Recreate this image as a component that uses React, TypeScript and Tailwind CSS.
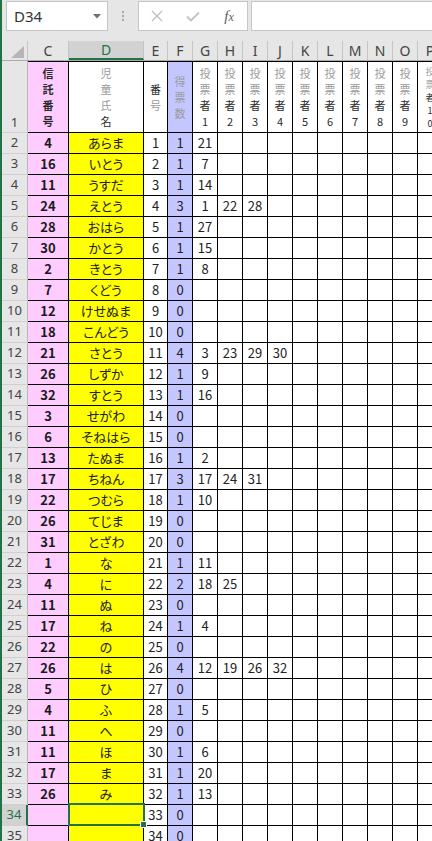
import React from 'react';

type R = { c?: number; d?: string; e: number; f: number; v: number[] };

const data: R[] = [
  { c: 4, d: 'あらま', e: 1, f: 1, v: [21] },
  { c: 16, d: 'いとう', e: 2, f: 1, v: [7] },
  { c: 11, d: 'うすだ', e: 3, f: 1, v: [14] },
  { c: 24, d: 'えとう', e: 4, f: 3, v: [1, 22, 28] },
  { c: 28, d: 'おはら', e: 5, f: 1, v: [27] },
  { c: 30, d: 'かとう', e: 6, f: 1, v: [15] },
  { c: 2, d: 'きとう', e: 7, f: 1, v: [8] },
  { c: 7, d: 'くどう', e: 8, f: 0, v: [] },
  { c: 12, d: 'けせぬま', e: 9, f: 0, v: [] },
  { c: 18, d: 'こんどう', e: 10, f: 0, v: [] },
  { c: 21, d: 'さとう', e: 11, f: 4, v: [3, 23, 29, 30] },
  { c: 26, d: 'しずか', e: 12, f: 1, v: [9] },
  { c: 32, d: 'すとう', e: 13, f: 1, v: [16] },
  { c: 3, d: 'せがわ', e: 14, f: 0, v: [] },
  { c: 6, d: 'そねはら', e: 15, f: 0, v: [] },
  { c: 13, d: 'たぬま', e: 16, f: 1, v: [2] },
  { c: 17, d: 'ちねん', e: 17, f: 3, v: [17, 24, 31] },
  { c: 22, d: 'つむら', e: 18, f: 1, v: [10] },
  { c: 26, d: 'てじま', e: 19, f: 0, v: [] },
  { c: 31, d: 'とざわ', e: 20, f: 0, v: [] },
  { c: 1, d: 'な', e: 21, f: 1, v: [11] },
  { c: 4, d: 'に', e: 22, f: 2, v: [18, 25] },
  { c: 11, d: 'ぬ', e: 23, f: 0, v: [] },
  { c: 17, d: 'ね', e: 24, f: 1, v: [4] },
  { c: 22, d: 'の', e: 25, f: 0, v: [] },
  { c: 26, d: 'は', e: 26, f: 4, v: [12, 19, 26, 32] },
  { c: 5, d: 'ひ', e: 27, f: 0, v: [] },
  { c: 4, d: 'ふ', e: 28, f: 1, v: [5] },
  { c: 11, d: 'へ', e: 29, f: 0, v: [] },
  { c: 11, d: 'ほ', e: 30, f: 1, v: [6] },
  { c: 17, d: 'ま', e: 31, f: 1, v: [20] },
  { c: 26, d: 'み', e: 32, f: 1, v: [13] },
  { e: 33, f: 0, v: [] },
  { e: 34, f: 0, v: [] },
];

const voteCols = ['G', 'H', 'I', 'J', 'K', 'L', 'M', 'N', 'O', 'P'];

function Toolbar() {
  return (
    <div className="h-[41px] shrink-0 bg-[#e6e6e6] flex items-start pt-[1px] pl-[4px] font-['Noto_Sans',sans-serif]">
      <div className="w-[102px] h-[30px] shrink-0 bg-white border border-[#c6c6c6] flex items-center justify-between pl-[7px] pr-[6px]">
        <span className="text-[15px] leading-none text-[#333] pt-[1px]">D34</span>
        <svg width="8" height="5" viewBox="0 0 8 5">
          <polygon points="0,0 8,0 4,4.5" fill="#707070" />
        </svg>
      </div>
      <div className="w-[30px] h-[30px] shrink-0 flex flex-col items-center justify-center gap-[2px]">
        <div className="w-[2px] h-[2px] bg-[#a6a6a6]" />
        <div className="w-[2px] h-[2px] bg-[#a6a6a6]" />
        <div className="w-[2px] h-[2px] bg-[#a6a6a6]" />
      </div>
      <div className="w-[110px] h-[30px] shrink-0 bg-white border border-[#c6c6c6] flex items-center">
        <div className="w-[36px] h-full flex items-center justify-center">
          <svg width="12" height="12" viewBox="0 0 12 12">
            <path d="M1 1 L11 11 M11 1 L1 11" stroke="#c2c2c2" strokeWidth="1.4" fill="none" />
          </svg>
        </div>
        <div className="w-[36px] h-full flex items-center justify-center">
          <svg width="14" height="11" viewBox="0 0 14 11">
            <path d="M1 5.5 L5 9.5 L13 1.5" stroke="#c2c2c2" strokeWidth="1.8" fill="none" />
          </svg>
        </div>
        <div className="w-[36px] h-full flex items-center justify-center">
          <span className="font-['Liberation_Serif',serif] italic text-[15px] leading-none text-[#606060]">
            f<span className="text-[12px]">x</span>
          </span>
        </div>
      </div>
      <div className="ml-[3px] w-[200px] h-[30px] shrink-0 bg-white border border-[#c6c6c6]" />
    </div>
  );
}

function ColHeader() {
  const cell = "h-full shrink-0 flex items-center justify-center border-r border-[#c4c4c4] text-[14px] text-[#444]";
  return (
    <div className="h-[20px] shrink-0 flex bg-[#e6e6e6] border-b border-[#ababab] font-['Noto_Sans',sans-serif]">
      <div className="w-[26px] h-full shrink-0 border-r border-[#c4c4c4] flex items-end justify-end pr-[3px] pb-[2px]">
        <svg width="13" height="12" viewBox="0 0 13 12">
          <polygon points="13,0 13,12 0,12" fill="#b5b5b5" />
        </svg>
      </div>
      <div className={`${cell} w-[41px]`}>C</div>
      <div className="w-[75px] h-full shrink-0 flex items-center justify-center border-r border-[#c4c4c4] bg-[#d2d2d2] border-b-2 border-b-[#217346] text-[14px] text-[#217346]">D</div>
      <div className={`${cell} w-[24px]`}>E</div>
      <div className={`${cell} w-[25px]`}>F</div>
      {voteCols.map((l) => (
        <div key={l} className={`${cell} w-[25px]`}>{l}</div>
      ))}
    </div>
  );
}

function Stack({ chars, bold, small }: { chars: [string, boolean][]; bold?: boolean; small?: boolean }) {
  return (
    <div className="flex flex-col items-center">
      {chars.map(([ch, dark], i) => (
        <div
          key={i}
          className={`${small ? 'text-[9px] leading-[13px]' : 'text-[11px] leading-[16px]'} ${bold ? 'font-bold' : ''} ${dark ? 'text-[#2a2a2a]' : 'text-[#9a9a9a]'}`}
        >
          {ch}
        </div>
      ))}
    </div>
  );
}

function HeaderRow() {
  const base = "h-full shrink-0 border-r border-t border-b border-black flex items-center justify-center";
  return (
    <div className="h-[72px] shrink-0 flex">
      <div className="w-[26px] h-full shrink-0 bg-[#e6e6e6] border-r border-r-[#b8b8b8] border-b border-b-[#d0d0d0] flex items-end justify-center pb-[1px] font-['Noto_Sans',sans-serif] text-[13px] leading-[18px] text-[#444]">
        1
      </div>
      <div className={`${base} w-[41px] bg-[#ffccff]`}>
        <Stack bold chars={[['信', true], ['託', true], ['番', true], ['号', true]]} />
      </div>
      <div className={`${base} w-[75px] bg-white`}>
        <Stack chars={[['児', false], ['童', false], ['氏', false], ['名', true]]} />
      </div>
      <div className={`${base} w-[24px] bg-white`}>
        <Stack chars={[['番', true], ['号', false]]} />
      </div>
      <div className={`${base} w-[25px] bg-[#c4c7ff]`}>
        <Stack chars={[['得', false], ['票', false], ['数', false]]} />
      </div>
      {voteCols.slice(0, 9).map((l, i) => (
        <div key={l} className={`${base} w-[25px] bg-white`}>
          <Stack chars={[['投', false], ['票', false], ['者', true], [String(i + 1), true]]} />
        </div>
      ))}
      <div className={`${base} w-[25px] bg-white`}>
        <Stack small chars={[['投', false], ['票', false], ['者', true], ['1', true], ['0', true]]} />
      </div>
    </div>
  );
}

function DataRow({ r, n }: { r: R; n: number }) {
  const sel = n === 34;
  const base = "h-full shrink-0 border-r border-b border-black flex items-center justify-center";
  return (
    <div className="h-[21px] shrink-0 flex">
      <div
        className={`w-[26px] h-full shrink-0 border-b border-b-[#d0d0d0] flex items-center justify-center font-['Noto_Sans',sans-serif] text-[13px] ${
          sel
            ? 'bg-[#d2d2d2] border-r-2 border-r-[#217346] text-[#217346]'
            : 'bg-[#e6e6e6] border-r border-r-[#b8b8b8] text-[#444]'
        }`}
      >
        {n}
      </div>
      <div className={`${base} w-[41px] bg-[#ffccff] text-[13px] font-bold text-[#1a1a1a]`}>{r.c ?? ''}</div>
      <div className={`${base} relative w-[75px] bg-[#ffff00] text-[13px] text-[#222] [font-feature-settings:'palt']`}>
        {r.d ?? ''}
        {sel && (
          <>
            <div className="absolute -left-[1px] -top-[2px] w-[77px] h-[23px] border-2 border-[#217346] z-10" />
            <div className="absolute left-[71px] top-[16px] w-[7px] h-[7px] bg-[#217346] border border-white z-20" />
          </>
        )}
      </div>
      <div className={`${base} w-[24px] bg-white text-[13px] text-[#222]`}>{r.e}</div>
      <div className={`${base} w-[25px] bg-[#c4c7ff] text-[13px] text-[#222]`}>{r.f}</div>
      {voteCols.map((l, i) => (
        <div key={l} className={`${base} w-[25px] bg-white text-[13px] text-[#222]`}>
          {r.v[i] ?? ''}
        </div>
      ))}
    </div>
  );
}

export default function App() {
  return (
    <div className="w-[432px] h-[841px] overflow-hidden bg-white border-l-2 border-[#217346] flex flex-col font-['Noto_Sans_CJK_JP',sans-serif]">
      <Toolbar />
      <div className="flex flex-col w-max">
        <ColHeader />
        <HeaderRow />
        {data.map((r, i) => (
          <DataRow key={i} r={r} n={i + 2} />
        ))}
      </div>
    </div>
  );
}
